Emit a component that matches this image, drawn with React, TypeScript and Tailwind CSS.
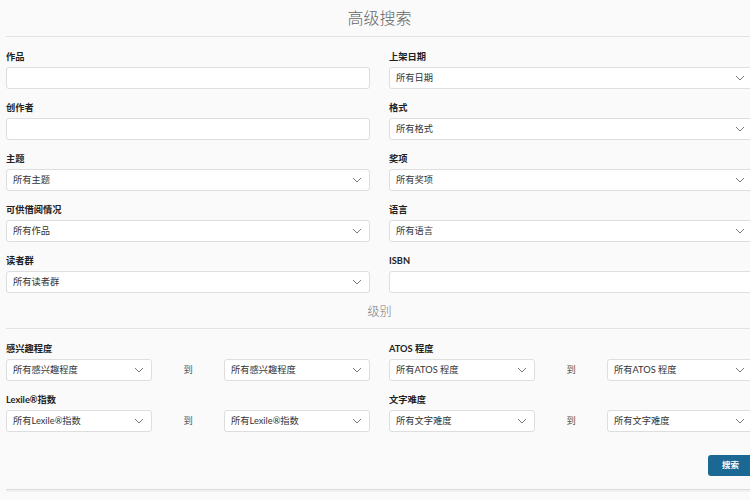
import React from "react";

const FONT = { fontFamily: 'Lato, "Noto Sans CJK SC", "Noto Sans", sans-serif' };

function Chevron() {
  return (
    <svg width="10" height="6" viewBox="0 0 10 6" className="shrink-0">
      <path d="M1 1 L5 5 L9 1" fill="none" stroke="#7a7a7a" strokeWidth="1" />
    </svg>
  );
}

function Select({ value }: { value?: string }) {
  return (
    <div className="h-[22px] bg-white border border-[#dedede] rounded-[3px] flex items-center justify-between pl-[6px] pr-[7px] text-[9.25px] text-[#333] leading-none">
      <span>{value}</span>
      <Chevron />
    </div>
  );
}

function TextInput() {
  return <div className="h-[22px] bg-white border border-[#dedede] rounded-[3px]" />;
}

function Label({ children }: { children: React.ReactNode }) {
  return (
    <div className="h-[14px] mb-[3px] flex items-center text-[9.25px] font-bold text-[#222] leading-none">
      {children}
    </div>
  );
}

function Field({ label, value, input }: { label: string; value?: string; input?: boolean }) {
  return (
    <div>
      <Label>{label}</Label>
      {input ? <TextInput /> : <Select value={value} />}
    </div>
  );
}

function RangeField({ label, value }: { label: string; value: string }) {
  return (
    <div>
      <Label>{label}</Label>
      <div className="grid grid-cols-[146px_1fr_146px] items-center">
        <Select value={value} />
        <div className="text-center text-[9.25px] text-[#555] leading-none">到</div>
        <Select value={value} />
      </div>
    </div>
  );
}

export default function App() {
  return (
    <div className="w-[750px] h-[500px] overflow-hidden bg-[#fafafa]" style={FONT}>
      <div className="ml-[6px] w-[747px]">
        <div className="h-[37px] flex items-center justify-center border-b border-[#e3e3e3] text-[16px] font-light text-[#666] pb-[1px]">
          高级搜索
        </div>
        <div className="pt-[13px] grid grid-cols-2 gap-x-[19px] gap-y-[12px]">
          <Field label="作品" input />
          <Field label="上架日期" value="所有日期" />
          <Field label="创作者" input />
          <Field label="格式" value="所有格式" />
          <Field label="主题" value="所有主题" />
          <Field label="奖项" value="所有奖项" />
          <Field label="可供借阅情况" value="所有作品" />
          <Field label="语言" value="所有语言" />
          <Field label="读者群" value="所有读者群" />
          <Field label="ISBN" input />
        </div>
        <div className="mt-[10px] h-[26px] pb-[8px] flex items-center justify-center border-b border-[#e3e3e3] text-[12px] font-light text-[#777]">
          级别
        </div>
        <div className="pt-[13px] grid grid-cols-2 gap-x-[19px] gap-y-[12px]">
          <RangeField label="感兴趣程度" value="所有感兴趣程度" />
          <RangeField label="ATOS 程度" value="所有ATOS 程度" />
          <RangeField label="Lexile®指数" value="所有Lexile®指数" />
          <RangeField label="文字难度" value="所有文字难度" />
        </div>
        <div className="mt-[23px] flex justify-end pb-[13px] border-b border-[#dcdcdc]">
          <button className="h-[21px] w-[45px] rounded-[3px] bg-[#1a6893] text-white text-[8.5px] font-bold leading-none">
            搜索
          </button>
        </div>
        <div className="h-[2px] bg-[#f0f0f0]" />
      </div>
    </div>
  );
}
